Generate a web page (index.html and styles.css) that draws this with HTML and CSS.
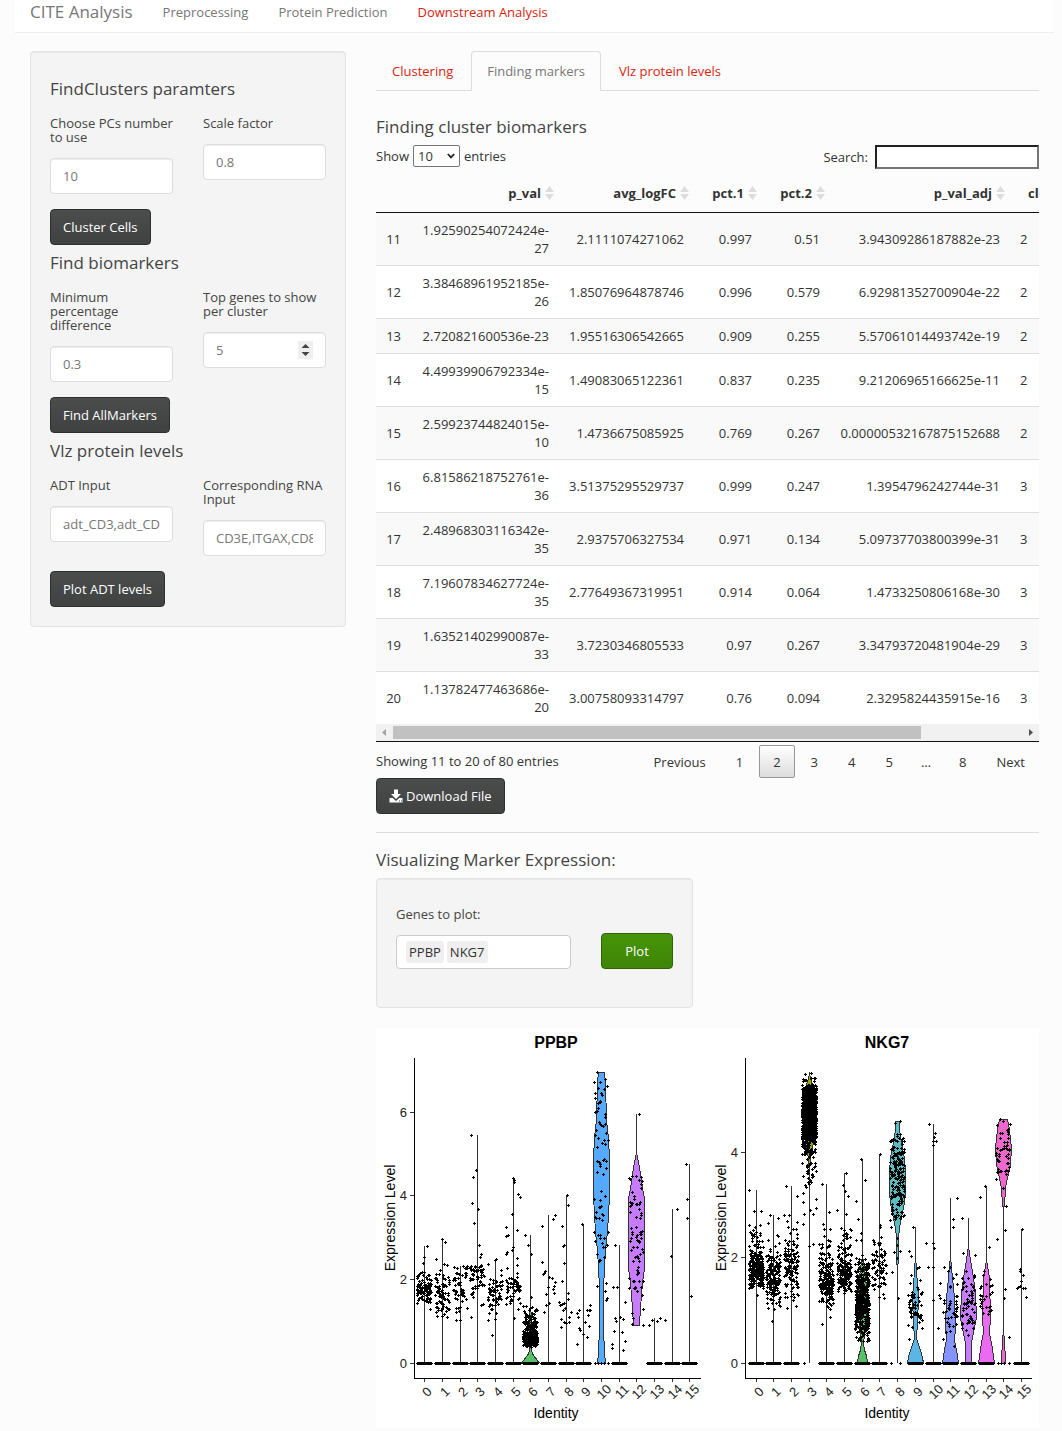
FILE: index.html
```html
<!DOCTYPE html>
<html lang="en">
<head>
<meta charset="utf-8">
<title>CITE Analysis</title>
<meta name="viewport" content="width=device-width, initial-scale=1">
<link rel="stylesheet" href="styles.css">
</head>
<body>
<nav class="navbar">
  <a class="brand" href="#">CITE Analysis</a>
  <a class="nav-link" href="#">Preprocessing</a>
  <a class="nav-link" href="#">Protein Prediction</a>
  <a class="nav-link active" href="#">Downstream Analysis</a>
</nav>
<div class="layout">
  <aside>
    <form class="well sidebar">
      <h4>FindClusters paramters</h4>
      <div class="fields">
        <div class="field"><label for="pcs">Choose PCs number to use</label><input class="control" id="pcs" type="text" value="10"></div>
        <div class="field"><label for="scale">Scale factor</label><input class="control" id="scale" type="text" value="0.8"></div>
      </div>
      <button class="btn" type="button">Cluster Cells</button>
      <h4>Find biomarkers</h4>
      <div class="fields">
        <div class="field"><label for="minpct">Minimum percentage difference</label><input class="control" id="minpct" type="text" value="0.3"></div>
        <div class="field"><label for="topn">Top genes to show per cluster</label>
          <div class="number"><input class="control" id="topn" type="number" value="5">
            <svg class="spinner" viewBox="0 0 15 18" aria-hidden="true"><rect width="15" height="18" fill="#efefef"/><path d="M3.5 7L7.5 3L11.5 7zM3.5 11L7.5 15L11.5 11z" fill="#444"/></svg></div>
        </div>
      </div>
      <button class="btn" type="button">Find AllMarkers</button>
      <h4>Vlz protein levels</h4>
      <div class="fields">
        <div class="field"><label for="adt">ADT Input</label><input class="control" id="adt" type="text" value="adt_CD3,adt_CD11c,adt_CD8"></div>
        <div class="field"><label for="rna">Corresponding RNA Input</label><input class="control" id="rna" type="text" value="CD3E,ITGAX,CD8A"></div>
      </div>
      <button class="btn" type="button">Plot ADT levels</button>
    </form>
  </aside>
  <main>
    <div class="tabs">
      <a class="tab" href="#">Clustering</a>
      <a class="tab selected" href="#">Finding markers</a>
      <a class="tab" href="#">Vlz protein levels</a>
    </div>
    <h4 class="table-title">Finding cluster biomarkers</h4>
    <div class="table-tools">
      <label class="length">Show
        <span class="select"><select><option>10</option><option>25</option><option>50</option></select>
          <svg viewBox="0 0 8 6" aria-hidden="true"><path d="M0.8 1L4 4.4L7.2 1" fill="none" stroke="#222" stroke-width="1.8"/></svg></span>
        entries</label>
      <label class="search">Search: <input type="search"></label>
    </div>
    <div class="table-scroll">
      <table>
        <colgroup><col class="c-index"><col class="c-pval"><col class="c-logfc"><col class="c-pct"><col class="c-pct"><col class="c-adj"><col></colgroup>
        <thead><tr><th></th><th><span class="sort">p_val</span></th><th><span class="sort">avg_logFC</span></th><th><span class="sort">pct.1</span></th><th><span class="sort">pct.2</span></th><th><span class="sort">p_val_adj</span></th><th class="left">cluster</th></tr></thead>
        <tbody>
          <tr><td>11</td><td>1.92590254072424e-27</td><td>2.1111074271062</td><td>0.997</td><td>0.51</td><td>3.94309286187882e-23</td><td class="left">2</td></tr>
          <tr><td>12</td><td>3.38468961952185e-26</td><td>1.85076964878746</td><td>0.996</td><td>0.579</td><td>6.92981352700904e-22</td><td class="left">2</td></tr>
          <tr><td>13</td><td>2.720821600536e-23</td><td>1.95516306542665</td><td>0.909</td><td>0.255</td><td>5.57061014493742e-19</td><td class="left">2</td></tr>
          <tr><td>14</td><td>4.49939906792334e-15</td><td>1.49083065122361</td><td>0.837</td><td>0.235</td><td>9.21206965166625e-11</td><td class="left">2</td></tr>
          <tr><td>15</td><td>2.59923744824015e-10</td><td>1.4736675085925</td><td>0.769</td><td>0.267</td><td>0.00000532167875152688</td><td class="left">2</td></tr>
          <tr><td>16</td><td>6.81586218752761e-36</td><td>3.51375295529737</td><td>0.999</td><td>0.247</td><td>1.3954796242744e-31</td><td class="left">3</td></tr>
          <tr><td>17</td><td>2.48968303116342e-35</td><td>2.9375706327534</td><td>0.971</td><td>0.134</td><td>5.09737703800399e-31</td><td class="left">3</td></tr>
          <tr><td>18</td><td>7.19607834627724e-35</td><td>2.77649367319951</td><td>0.914</td><td>0.064</td><td>1.4733250806168e-30</td><td class="left">3</td></tr>
          <tr><td>19</td><td>1.63521402990087e-33</td><td>3.7230346805533</td><td>0.97</td><td>0.267</td><td>3.34793720481904e-29</td><td class="left">3</td></tr>
          <tr><td>20</td><td>1.13782477463686e-20</td><td>3.00758093314797</td><td>0.76</td><td>0.094</td><td>2.3295824435915e-16</td><td class="left">3</td></tr>
        </tbody>
      </table>
    </div>
    <div class="scrollbar" aria-hidden="true">
      <svg viewBox="0 0 17 17"><path d="M10 5L6 8.5L10 12z" fill="#a3a3a3"/></svg>
      <div class="track"><div class="thumb"></div></div>
      <svg viewBox="0 0 17 17"><path d="M7 5L11 8.5L7 12z" fill="#505050"/></svg>
    </div>
    <div class="table-foot">
      <div class="info">Showing 11 to 20 of 80 entries</div>
      <div class="pages">
        <a class="page" href="#">Previous</a><a class="page" href="#">1</a><a class="page current" href="#">2</a><a class="page" href="#">3</a><a class="page" href="#">4</a><a class="page" href="#">5</a><span class="dots">…</span><a class="page" href="#">8</a><a class="page" href="#">Next</a>
      </div>
    </div>
    <button class="btn download" type="button"><svg viewBox="0 0 14 14" aria-hidden="true"><path d="M5 0.5h4V5h3L7 10L2 5h3z" fill="#fff"/><path d="M0.5 9h3.2L7 12l3.3-3h3.2v4.5H0.5z" fill="#fff"/><path d="M10 12h1M12 12h1" stroke="#444"/></svg>Download File</button>
    <hr>
    <h4 class="plot-title">Visualizing Marker Expression:</h4>
    <form class="well genes">
      <div class="gene-field">
        <label for="genes">Genes to plot:</label>
        <div class="tags"><span class="tag">PPBP</span><span class="tag">NKG7</span><input id="genes" type="text"></div>
      </div>
      <button class="btn plot" type="button">Plot</button>
    </form>
    <svg class="violins" id="violins" viewBox="0 0 663 400" role="img" aria-label="Expression level by identity for PPBP and NKG7"></svg>
  </main>
</div>
<script src="plots.js"></script>
</body>
</html>
```
FILE: styles.css
```css
* { box-sizing: border-box; }
body {
  margin: 0;
  background: #fcfcfc;
  color: #444;
  font: 13px/18px "Open Sans", "Noto Sans", sans-serif;
}
a { color: #d9230f; text-decoration: none; }
h4 { margin: 9px 0; font-size: 17px; line-height: 19px; font-weight: 400; }
input, select, button { font: inherit; }

.navbar {
  display: flex;
  align-items: center;
  gap: 30px;
  height: 33px;
  margin: 0 8px 0 15px;
  padding: 0 15px 8px;
  background: #fff;
  border-bottom: 1px solid #eee;
}
.navbar a { color: #777; }
.navbar .brand { font-size: 17px; }
.navbar .active { color: #d9230f; }

.layout {
  display: grid;
  grid-template-columns: 316px minmax(0, 1fr);
  gap: 30px;
  align-items: start;
  padding: 18px 23px 3px 30px;
}
.well {
  padding: 19px;
  background: #f4f4f4;
  border: 1px solid #e3e3e3;
  border-radius: 4px;
  box-shadow: inset 0 1px 1px rgba(0, 0, 0, .05);
}
.sidebar h4 { margin: 8px 0 18px; }
.fields { display: grid; grid-template-columns: 1fr 1fr; gap: 30px; align-items: start; margin-bottom: 15px; }
.field label { display: block; margin-bottom: 14px; line-height: 14px; }
.control {
  display: block;
  width: 100%;
  height: 36px;
  padding: 8px 12px;
  color: #777;
  background: #fff;
  border: 1px solid #ddd;
  border-radius: 4px;
  box-shadow: inset 0 1px 1px rgba(0, 0, 0, .075);
  appearance: textfield;
}
.control::-webkit-inner-spin-button { appearance: none; }
.number { position: relative; }
.spinner { position: absolute; right: 13px; top: 9px; width: 15px; height: 18px; }
.btn {
  display: inline-flex;
  align-items: center;
  justify-content: center;
  gap: 3px;
  height: 36px;
  padding: 0 12px;
  color: #fff;
  background: linear-gradient(#4b4d4d, #404242);
  border: 1px solid #2e2f2f;
  border-radius: 4px;
  vertical-align: top;
}

.tabs { display: flex; height: 40px; border-bottom: 1px solid #ddd; }
.tab { margin-right: 2px; padding: 10px 15px; height: 40px; border: 1px solid transparent; border-radius: 4px 4px 0 0; }
.tab.selected { color: #777; background: #fcfcfc; border-color: #ddd #ddd #fcfcfc; }
.table-title { margin-top: 26px; }
.table-tools { display: flex; justify-content: space-between; height: 24px; margin-bottom: 6px; color: #333; }
.length { display: flex; align-items: center; gap: 4px; height: 22px; }
.select { position: relative; display: flex; }
.select select { width: 47px; height: 22px; padding: 0 4px; color: #333; background: #fff; border: 1px solid #767676; border-radius: 2px; appearance: none; }
.select svg { position: absolute; right: 5px; top: 8px; width: 8px; height: 6px; }
.search { display: flex; align-items: center; gap: 7px; }
.search input { width: 164px; height: 24px; padding: 1px 2px; background: #fff; border: 2px inset #767676; border-radius: 0; appearance: none; }

.table-scroll { overflow: hidden; color: #333; }
table { width: 793px; table-layout: fixed; border-collapse: separate; border-spacing: 0; }
.c-index { width: 37px; }
.c-pval { width: 147px; }
.c-logfc { width: 135px; }
.c-pct { width: 68px; }
.c-adj { width: 180px; }
th { height: 38px; padding: 0 6px 2px 17px; text-align: right; font-weight: 700; border-bottom: 1px solid #111; }
td { padding: 8px 11px 8px 9px; text-align: right; border-top: 1px solid #ddd; }
td:first-child { padding-right: 12px; padding-left: 4px; }
tr:first-child td { border-top: 0; }
tbody tr { background: #fff; }
tbody tr:nth-child(odd) { background: #f9f9f9; }
.left { text-align: left; }
.sort { display: inline-flex; align-items: center; gap: 4px; }
.sort svg { width: 9px; height: 14px; }
.scrollbar { display: flex; height: 18px; background: #f1f1f1; border-bottom: 1px solid #111; }
.scrollbar svg { width: 17px; height: 17px; }
.track { flex: 1; padding: 2px 0; }
.thumb { width: 84%; height: 13px; background: #c1c1c1; }

.table-foot { display: flex; justify-content: space-between; height: 36px; padding-top: 3px; color: #333; }
.info { padding-top: 7px; }
.pages { display: flex; gap: 2px; }
.page, .dots { height: 33px; padding: 7px 13px; color: #333; }
.page { border: 1px solid transparent; border-radius: 2px; }
.page.current { border-color: #979797; background: linear-gradient(#fff, #dcdcdc); }
.dots { margin: 0 -1px; padding-top: 8px; }
.download svg { width: 14px; height: 14px; }
hr { margin: 18px 0 17px; border: 0; border-top: 1px solid #ddd; }
.plot-title { margin: 0 0 9px; }
.genes { display: flex; gap: 30px; width: 317px; height: 130px; margin-bottom: 20px; padding-top: 28px; }
.gene-field { flex: 1; min-width: 0; }
.gene-field label { display: block; margin-bottom: 14px; line-height: 14px; }
.tags { display: flex; align-items: center; gap: 3px; height: 34px; padding: 0 9px; background: #fff; border: 1px solid #ccc; border-radius: 4px; }
.tag { height: 22px; padding: 2px 3px; line-height: 18px; color: #333; background: #efefef; border-radius: 3px; }
.tags input { flex: 1; min-width: 0; padding: 0; border: 0; background: none; outline: 0; }
.plot { flex: none; width: 72px; margin-top: 26px; background: linear-gradient(#469408, #3f8507); border-color: #2f6405; }

.violins { display: block; width: 100%; background: #fff; font-family: "Liberation Sans", Arial, sans-serif; fill: #000; }
.violins .title { font-size: 16px; font-weight: 700; }
.violins .axis-name { font-size: 14px; }
.violins .tick { font-size: 13px; fill: #222; }
```
FILE: plots.js
```js
// Sort arrows in the table header.
document.querySelectorAll('.sort').forEach(el => {
  el.insertAdjacentHTML('beforeend', '<svg viewBox="0 0 9 14" aria-hidden="true"><path d="M0 6L4.5 0L9 6zM0 8L4.5 14L9 8z" fill="#ddd"/></svg>');
});

// Seeded generator, so that the jitter is the same on every load.
let seed = 7;
const rnd = () => ((seed = (seed * 1664525 + 1013904223) >>> 0) / 4294967296);
const gauss = () => Math.sqrt(-2 * Math.log(rnd() + 1e-9)) * Math.cos(6.28318 * rnd());

// Each group: top of its line, clouds [n, mean, sd, min, max] (sd 0: even spread),
// single points [dx, y, ...], violin [y, half width, ...] with fill.
const G = (top, clouds, pts, violin, fill, zero = 7) => ({ top, clouds, pts, violin, fill, zero });
const PPBP = [
  G(218, [[75, 264, 6, 250, 281], [25, 253, 8, 241, 265]], [3,218, 0,229, -1,235, 6,281]),
  G(212, [[80, 268, 13, 246, 290]], [0,211, 3,214, -6,231, -2,242, 2,236, 5,237]),
  G(238, [[55, 257, 14, 238, 287]], [-4,292, 0,292]),
  G(107, [[45, 245, 8, 234, 274], [12, 262, 8, 250, 274]], [-6,107, -1,142, -4,149, -5,175, 1,181, -3,195, 2,217, 4,226, 3,229, -6,289, 4,277, 6,276]),
  G(231, [[55, 266, 10, 239, 285]], [0,232, 1,231, -7,236, 6,247, -3,307, -7,292, 0,291, -5,251]),
  G(150, [[50, 263, 8, 249, 280]], [0,150, 1,152, 1,154, 5,166, 7,169, -1,186, -7,199, 4,202, -5,207, -7,208, 0,219, -1,222, -6,224, -7,226, 4,230, 4,237, -6,240, 4,245, 1,290, 5,281]),
  G(207, [[130, 300, 12, 277, 319], [190, 311, 5, 295, 319]], [-5,207, -2,217, 1,226, 1,269], [277,0, 290,1, 322,1, 326,2, 330,5, 334,8], '#5bbf6a'),
  G(187, [], [7,187, 5,191, -6,198, -6,234, -3,243, -4,245, -5,246, 1,249, 4,250, 7,254, 0,259, 5,261, 6,265, -2,266, 1,275, -2,277, -4,284, 6,258]),
  G(167, [], [1,167, 2,177, -4,198, -2,217, -3,218, -2,235, -4,253, 2,265, -7,274, -6,277, -4,276, -2,275, -1,280, -3,282, 2,271, 5,284, 3,289, -5,291, -2,294, 0,295, 3,294, -5,299]),
  G(196, [], [-1,196, 7,277, -4,282, -6,285, -5,289, 4,282, 6,282, 7,282, 5,287, 2,294, 6,298, -4,300, -3,302, 0,306, 4,309, -6,316]),
  G(44, [[72, 0, 0, 50, 240]], [-4,44, 5,255, -4,258, 4,263, 6,270, 5,272, -6,335, -3,335, 0,335, 3,335, 7,335], [44,3, 55,4, 92,5, 110,7, 131,8, 168,8, 204,6, 222,4, 240,3, 260,2, 300,2, 325,3, 335,4], '#55a9ff', 0),
  G(217, [], [-4,217, -6,259, -2,259, 6,274, -4,290, 1,289, 4,291, -3,293, -5,303, 3,304, 6,313, -7,316, -7,320, 4,322]),
  G(86, [[72, 0, 0, 146, 267]], [3,86, 7,281, -4,285, -3,290, 7,297, -4,296], [86,0, 124,0, 140,3, 160,6, 171,8, 240,8, 255,6, 280,4, 297,3], '#c77cff', -1),
  G(290, [], [-5,297, -2,292, 3,293, 6,290, 11,292]),
  G(181, [], [5,181, -1,228]),
  G(136, [], [-3,136, -2,171, -2,190, 2,268])
];
const NKG7 = [
  G(162, [[90, 230, 17, 199, 262], [170, 243, 9, 222, 260]], [-7,162, -2,183, 5,183, -7,197, 4,197, 0,204, 1,267]),
  G(187, [[170, 250, 15, 207, 280]], [-3,187, 5,190, -5,195, 5,208, -1,293, 1,281, -5,280]),
  G(158, [[130, 234, 20, 190, 272]], [-5,158, 6,168, -2,187, -7,187, 6,194, -4,280, 5,278]),
  G(46, [[1100, 86, 17, 57, 113], [170, 106, 15, 50, 140], [20, 57, 6, 46, 65], [26, 145, 10, 135, 165]], [-4,46, 2,45, 7,171, -6,174, 7,180, 1,182, 4,186, -5,186, -6,196, 4,216, 0,218, -5,335], [46,0, 65,5, 90,7, 115,4, 130,1, 145,0, 168,0], '#a3a500', 0),
  G(156, [[70, 235, 18, 200, 289], [150, 257, 11, 232, 284]], [-4,156, 3,184, -3,196, 4,201, -4,296, 4,289]),
  G(145, [[70, 228, 18, 200, 272], [110, 248, 8, 232, 265]], [2,145, -1,157, 1,163, 4,168, -7,182, 2,186, 7,202]),
  G(131, [[430, 275, 22, 235, 314], [25, 240, 8, 227, 250]], [-1,131, 3,152, -6,173, -4,191, -1,205, -6,212, -1,212], [205,0, 228,0, 240,2, 270,5, 300,3, 315,1, 322,2, 328,4, 334,5], '#5bbf6a'),
  G(126, [[70, 238, 16, 215, 282]], [1,126, 1,197, 1,199, -6,212, -5,214, 2,209]),
  G(93, [[175, 150, 27, 100, 192]], [3,93, -2,95, -6,199, 0,210, 0,217, -3,224, 3,223, 0,230, -5,244, 1,270, -6,335, 3,335], [93,2, 102,2, 115,4, 130,7, 145,8, 165,8, 175,7, 190,4, 200,2, 210,1, 230,1, 243,0], '#5bbdc4', 0),
  G(199, [[55, 278, 14, 255, 307]], [-2,199, -6,223, -4,228, 4,239, 2,240, -4,247, 5,252, -6,311], [227,0, 243,1, 270,3, 295,2, 310,1, 317,3, 325,6, 335,8], '#5bb6e6'),
  G(96, [], [-4,96, 2,105, 1,109, 0,113, 3,113, 0,117, -7,215, 0,215, 1,220, -5,239, 0,239, 7,255, 6,267, 0,272, 7,270, 5,300]),
  G(170, [[38, 281, 12, 250, 308]], [7,170, 3,191, 3,199, -6,239, 0,239, 6,246, -2,243, -7,311, 4,318], [170,0, 228,0, 250,2, 270,4, 300,5, 312,4, 322,6, 335,8], '#8494ff'),
  G(190, [[66, 275, 22, 245, 308]], [-6,190, -5,225, 7,227, -2,243], [190,0, 218,0, 232,2, 250,5, 265,7, 290,8, 305,5, 315,3, 335,3], '#c77cff'),
  G(158, [[24, 275, 10, 255, 290]], [-1,158, -6,169, 3,219, -2,243, -3,247, 4,251], [158,0, 232,0, 250,3, 290,4, 305,3, 315,5, 335,8], '#ea6af1'),
  G(91, [[45, 0, 0, 95, 146]], [-3,91, 0,93, -7,151, 0,160, 3,178, 2,202, -6,211, 2,261, 1,270, 6,309, -5,335, -2,335, 1,335, 6,335], [91,4, 102,6, 120,8, 137,7, 150,4, 160,2, 178,1, 179,0, 305,0, 310,1, 335,2], '#ee67cc', 0),
  G(201, [], [1,201, -1,241, -1,243, 2,247, 0,253, 2,260, -1,258, -3,259, -4,260, 4,260, 5,269])
];

const dot = (x, y) => `M${x} ${y - 1}h1v1h1v1h-1v1h-1v-1h-1v-1h1z`;

function panel(title, groups, left, first, ticks) {
  let shapes = '', dots = '', labels = '';
  groups.forEach((g, i) => {
    const c = Math.floor(first + i * 17.67);
    if (g.zero >= 0) shapes += `<path d="M${c + .5} ${g.top}V335" stroke="#333" fill="none"/>`;
    if (g.violin) {
      const a = [], b = [];
      for (let k = 0; k < g.violin.length; k += 2) {
        a.push(`${c + .5 - g.violin[k + 1]},${g.violin[k]}`);
        b.unshift(`${c + .5 + g.violin[k + 1]},${g.violin[k]}`);
      }
      shapes += `<polygon points="${a.concat(b).join(' ')}" fill="${g.fill}" stroke="#333"/>`;
    }
    for (const [n, mean, sd, lo, hi] of g.clouds) {
      for (let k = 0; k < n; k++) {
        let y;
        do { y = sd ? mean + sd * gauss() : lo + rnd() * (hi - lo); } while (y < lo || y > hi);
        dots += dot(c + Math.round(rnd() * 14 - 7), Math.round(y));
      }
    }
    for (let k = 0; k < g.pts.length; k += 2) dots += dot(c + g.pts[k], g.pts[k + 1]);
    if (g.zero > 0) {
      for (let x = -g.zero; x <= g.zero; x++) dots += dot(c + x, 335);
    }
    shapes += `<path d="M${c + .5} 350v4" stroke="#333"/>`;
    labels += `<text class="tick" text-anchor="middle" transform="translate(${c + 6} 367) rotate(-45)">${i}</text>`;
  });
  for (const [v, y] of ticks) {
    shapes += `<path d="M${left - 4} ${y + .5}h4" stroke="#333"/>`;
    labels += `<text class="tick" text-anchor="end" x="${left - 7}" y="${y + 5}">${v}</text>`;
  }
  const mid = left + 142;
  return `<g shape-rendering="crispEdges">${shapes}<path d="${dots}"/>` +
    `<path d="M${left + .5} 30V350.5H${left + 287}" fill="none" stroke="#000"/></g>${labels}` +
    `<text class="title" text-anchor="middle" x="${mid}" y="20">${title}</text>` +
    `<text class="axis-name" text-anchor="middle" x="${mid}" y="390">Identity</text>` +
    `<text class="axis-name" text-anchor="middle" transform="translate(${left - 19} 190) rotate(-90)">Expression Level</text>`;
}

document.getElementById('violins').innerHTML =
  panel('PPBP', PPBP, 38, 48.9, [[0, 335], [2, 251], [4, 167], [6, 84]]) +
  panel('NKG7', NKG7, 369, 380.3, [[0, 335], [2, 229], [4, 124]]);
```
